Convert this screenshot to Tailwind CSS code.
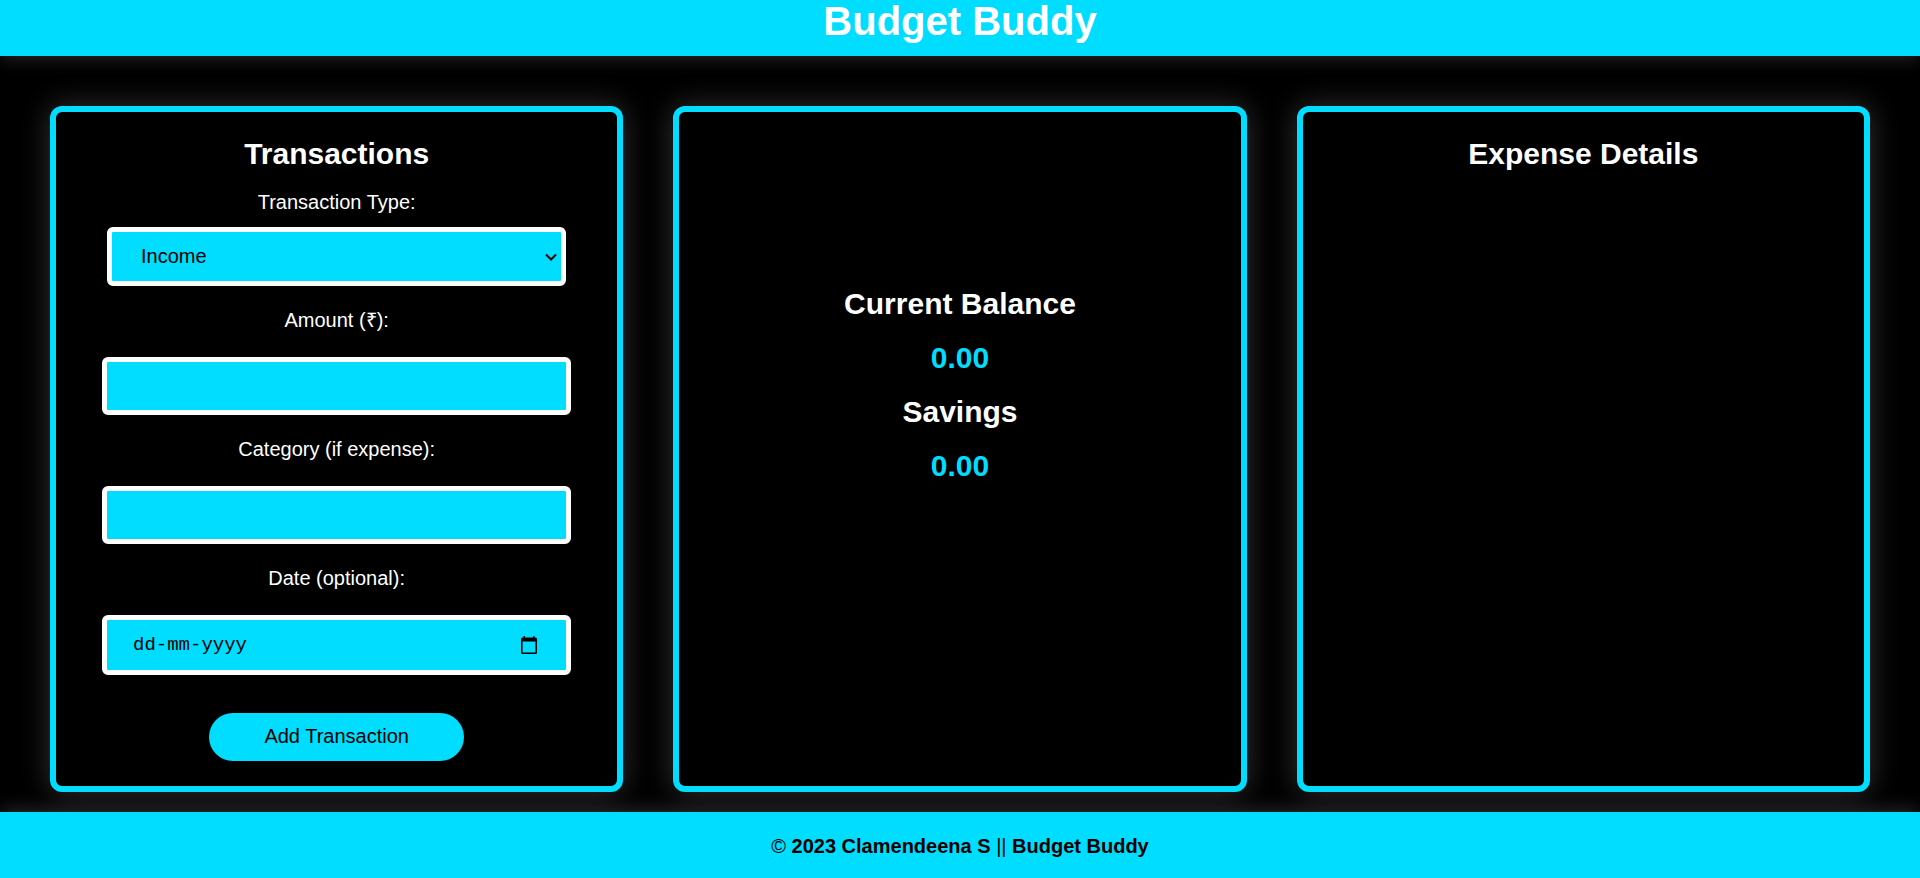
<!DOCTYPE html>
<html lang="en">
<head>
<meta charset="utf-8">
<meta name="viewport" content="width=device-width, initial-scale=1">
<title>Budget Buddy</title>
<script src="https://cdn.jsdelivr.net/npm/@tailwindcss/browser@4"></script>
</head>
<body class="flex min-h-screen flex-col bg-black font-['Liberation_Sans',Arial,sans-serif] text-xl leading-6 text-white">
  <header class="bg-[#00ddff] pt-px pb-[15px] text-center shadow-[0_0_20px_rgba(255,255,255,0.2)]">
    <h1 class="text-[40px] leading-10 font-bold">Budget Buddy</h1>
  </header>

  <main class="grid flex-1 grid-cols-3 gap-[50px] px-[50px] pt-[50px] pb-5">
    <section class="rounded-xl border-6 border-[#00ddff] bg-black px-[46px] pt-6 pb-[25px] shadow-[0_0_30px_rgba(255,255,255,0.2)]">
      <h2 class="text-center text-3xl leading-9 font-bold">Transactions</h2>
      <form class="mt-[18px] flex flex-col items-center">
        <label for="type">Transaction Type:</label>
        <div class="mt-[13px] grid w-full items-center px-[5px]">
          <select id="type" class="col-start-1 row-start-1 h-[59px] w-full appearance-none rounded-md border-5 border-white bg-[#00ddff] px-[29px] pb-0.5 text-black">
            <option>Income</option>
            <option>Expense</option>
          </select>
          <svg class="pointer-events-none col-start-1 row-start-1 mr-[9px] h-3 w-3 justify-self-end" viewBox="0 0 12 12" fill="none" stroke="#000" stroke-width="2" aria-hidden="true"><path d="M1 3.500l5 5 5-5"/></svg>
        </div>

        <label for="amount" class="mt-[22px]">Amount (₹):</label>
        <input id="amount" type="number" class="mt-[25px] h-[58px] w-full rounded-md border-5 border-white bg-[#00ddff] px-[25px] text-black">

        <label for="category" class="mt-[22px]">Category (if expense):</label>
        <input id="category" type="text" class="mt-[25px] h-[58px] w-full rounded-md border-5 border-white bg-[#00ddff] px-[25px] text-black">

        <label for="date" class="mt-[22px]">Date (optional):</label>
        <div class="mt-[25px] flex h-[60px] w-full items-center rounded-md border-5 border-white bg-[#00ddff] pr-[27px] pl-[26px]">
          <input id="date" type="text" placeholder="dd-mm-yyyy" class="min-w-0 flex-1 bg-transparent font-['Liberation_Mono',monospace] text-[19px] text-black outline-none placeholder:text-black">
          <button type="button" aria-label="Open calendar" class="h-5 w-5">
            <svg viewBox="0 0 20 20" class="h-5 w-5"><path fill="#000" fill-rule="evenodd" d="M4.500 1H6v1.500h8V1h1.500v1.500h1A1.500 1.500 0 0 1 18 4v13.500a1.500 1.500 0 0 1-1.500 1.500h-13A1.500 1.500 0 0 1 2 17.500V4a1.500 1.500 0 0 1 1.500-1.500h1zM3.600 6.500v10.900h12.800V6.500z"/></svg>
          </button>
        </div>

        <button type="submit" class="mt-[38px] h-12 w-[255px] rounded-full bg-[#00ddff] pb-0.5 text-black">Add Transaction</button>
      </form>
    </section>

    <section class="flex flex-col gap-[18px] rounded-xl border-6 border-[#00ddff] bg-black pt-[174px] text-center text-3xl leading-9 font-bold shadow-[0_0_30px_rgba(255,255,255,0.2)]">
      <h2>Current Balance</h2>
      <p class="text-[#00ddff]">0.00</p>
      <h2>Savings</h2>
      <p class="text-[#00ddff]">0.00</p>
    </section>

    <section class="rounded-xl border-6 border-[#00ddff] bg-black pt-6 shadow-[0_0_30px_rgba(255,255,255,0.2)]">
      <h2 class="text-center text-3xl leading-9 font-bold">Expense Details</h2>
    </section>
  </main>

  <footer class="bg-[#00ddff] pt-[22px] pb-5 text-center font-bold text-black shadow-[0_0_20px_rgba(255,255,255,0.2)]">
    <p><span class="font-normal">©</span> 2023 Clamendeena S <span class="font-normal">||</span> Budget Buddy</p>
  </footer>
</body>
</html>
